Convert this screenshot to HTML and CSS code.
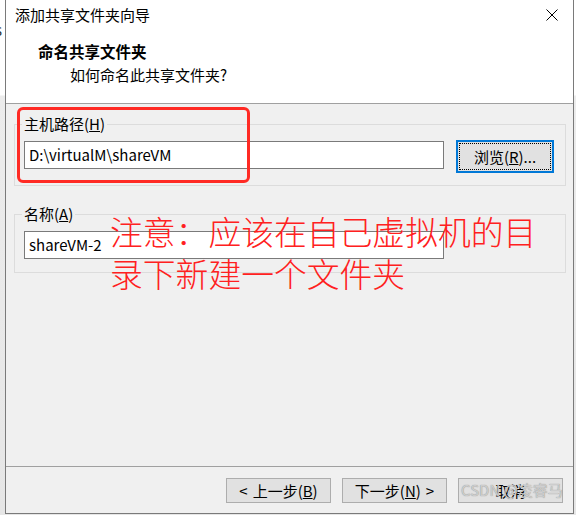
FILE: index.html
```html
<!DOCTYPE html>
<html lang="zh-CN">
<head>
<meta charset="utf-8">
<title>添加共享文件夹向导</title>
<link rel="stylesheet" href="styles.css">
</head>
<body>
<span class="behind-s">s</span>
<div class="window">
  <div class="titlebar">
    <span class="title">添加共享文件夹向导</span>
    <svg class="close" width="12" height="12" viewBox="0 0 12 12"><path d="M0.5 0.5 L11.5 11.5 M11.5 0.5 L0.5 11.5" stroke="#000" stroke-width="1" fill="none"/></svg>
  </div>
  <div class="header">
    <div class="h-title">命名共享文件夹</div>
    <div class="h-sub">如何命名此共享文件夹?</div>
  </div>
  <div class="content">
    <fieldset class="group g1">
      <legend>主机路径(<u>H</u>)</legend>
      <div class="row">
        <div class="input">D:\virtualM\shareVM</div>
        <button class="btn browse">浏览(<u>R</u>)...</button>
      </div>
    </fieldset>
    <fieldset class="group g2">
      <legend>名称(<u>A</u>)</legend>
      <div class="row">
        <div class="input">shareVM-2</div>
      </div>
    </fieldset>
  </div>
  <div class="footer">
    <button class="btn"><span class="arr">&lt;</span>上一步(<u>B</u>)</button>
    <button class="btn">下一步(<u>N</u>)<span class="arr r">&gt;</span></button>
    <button class="btn">取消</button>
  </div>
  <div class="mark-rect"></div>
  <div class="note">注意：应该在自己虚拟机的目<br>录下新建一个文件夹</div>
  <div class="watermark">CSDN @凌睿马</div>
</div>
</body>
</html>
```
FILE: styles.css
```css
html, body {
  margin: 0;
  padding: 0;
}
body {
  width: 576px;
  height: 515px;
  overflow: hidden;
  position: relative;
  background: linear-gradient(#ffffff 0, #ffffff 95px, #ececec 96px, #e6e6e6 100%);
  font-family: "Noto Sans CJK SC", "Noto Sans", sans-serif;
  font-size: 15px;
  color: #000;
}
.behind-s {
  position: absolute;
  left: -5px;
  top: 21px;
  font-size: 15px;
  line-height: 18px;
  color: #333;
}
.window {
  position: relative;
  margin-left: 5px;
  width: 567px;
  height: 513px;
  border-left: 1px solid #7a7a7a;
  border-right: 1px solid #7a7a7a;
  border-bottom: 1px solid #7a7a7a;
  background: #f0f0f0;
  display: flex;
  flex-direction: column;
}
.titlebar {
  height: 30px;
  background: #fff;
  display: flex;
  align-items: center;
  justify-content: space-between;
  padding: 0 15px 0 9px;
}
.title {
  line-height: 20px;
  font-size: 15px;
}
.close {
  display: block;
}
.header {
  height: 74px;
  background: #fff;
  border-bottom: 1px solid #a0a0a0;
  box-sizing: border-box;
  padding: 11px 0 0 32px;
}
.h-title {
  font-weight: 700;
  font-size: 15.5px;
  line-height: 20px;
}
.h-sub {
  margin: 4px 0 0 32px;
  line-height: 20px;
}
.content {
  flex: 1;
  padding-top: 10px;
}
.group {
  margin: 0 7px 0 8px;
  border: 1px solid #dcdcdc;
  padding: 0 11px 12px 9px;
}
.group legend {
  padding: 0 2px;
  margin-left: -2px;
  line-height: 20px;
}
.g2 {
  margin-top: 18px;
}
.row {
  display: flex;
  align-items: flex-start;
  gap: 12px;
  padding-top: 7px;
}
.input {
  width: 420px;
  height: 28px;
  box-sizing: border-box;
  border: 1px solid #7a7a7a;
  background: #fff;
  padding: 0 4px;
  line-height: 26px;
  white-space: nowrap;
}
.g2 .input {
  margin-bottom: 1px;
}
.btn {
  font-family: inherit;
  font-size: 15px;
  color: #000;
  background: #e1e1e1;
  border: 1px solid #adadad;
  width: 105px;
  height: 25px;
  padding: 0;
  line-height: 20px;
  margin: 0;
}
.arr {
  margin-right: 5px;
}
.arr.r {
  margin: 0 0 0 5px;
}
.browse {
  width: 98px;
  height: 33px;
  margin-top: -1px;
  border: 2px solid #0078d7;
  outline: 1px dotted #000;
  outline-offset: -4px;
}
.footer {
  border-top: 1px solid #a0a0a0;
  height: 47px;
  box-sizing: border-box;
  display: flex;
  justify-content: flex-end;
  align-items: flex-start;
  gap: 11px;
  padding: 11px 10px 0 0;
}
.mark-rect {
  position: absolute;
  left: 11px;
  top: 107px;
  width: 233px;
  height: 76px;
  box-sizing: border-box;
  border: 3px solid #ff2a24;
  border-radius: 6px;
}
.note {
  position: absolute;
  left: 104px;
  top: 210px;
  color: #ff2020;
  font-size: 32.8px;
  line-height: 42px;
  font-weight: 300;
  white-space: nowrap;
}
.watermark {
  position: absolute;
  left: 455px;
  top: 480px;
  font-size: 15px;
  line-height: 20px;
  color: rgba(215, 215, 215, 0.9);
  text-shadow: 0 0 1px #7a7a7a;
  white-space: nowrap;
}
```
